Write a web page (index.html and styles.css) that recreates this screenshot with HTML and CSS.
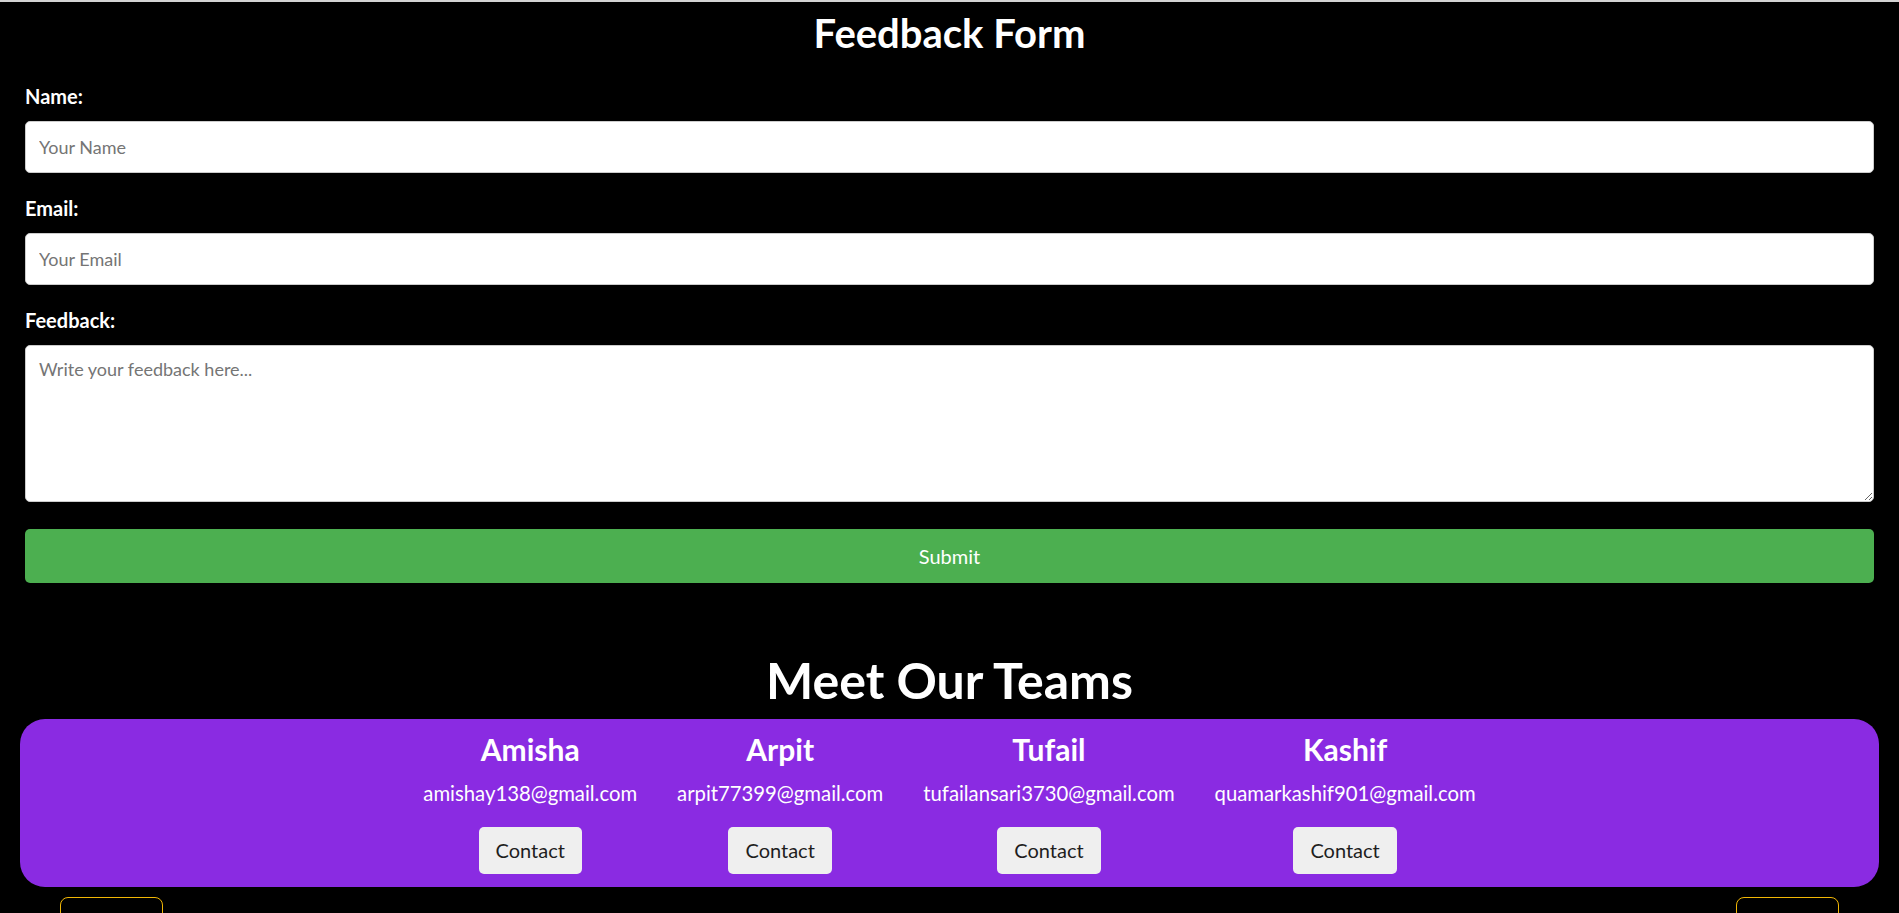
FILE: index.html
```html
<!DOCTYPE html>
<html lang="en">
<head>
<meta charset="utf-8">
<title>Feedback Form</title>
<link rel="stylesheet" href="styles.css">
</head>
<body>
<div class="topline"></div>
<main class="form-wrap">
  <h1 class="form-title">Feedback Form</h1>
  <form class="feedback-form">
    <label class="field-label" for="name">Name:</label>
    <input class="field-input" id="name" type="text" placeholder="Your Name">
    <label class="field-label" for="email">Email:</label>
    <input class="field-input" id="email" type="email" placeholder="Your Email">
    <label class="field-label" for="feedback">Feedback:</label>
    <textarea class="field-text" id="feedback" placeholder="Write your feedback here..."></textarea>
    <button class="submit-btn" type="button">Submit</button>
  </form>
</main>
<section class="team">
  <h2 class="team-title">Meet Our Teams</h2>
  <div class="team-box">
    <div class="member">
      <h3 class="member-name">Amisha</h3>
      <p class="member-email">amishay138@gmail.com</p>
      <button class="contact-btn" type="button">Contact</button>
    </div>
    <div class="member">
      <h3 class="member-name">Arpit</h3>
      <p class="member-email">arpit77399@gmail.com</p>
      <button class="contact-btn" type="button">Contact</button>
    </div>
    <div class="member">
      <h3 class="member-name">Tufail</h3>
      <p class="member-email">tufailansari3730@gmail.com</p>
      <button class="contact-btn" type="button">Contact</button>
    </div>
    <div class="member">
      <h3 class="member-name">Kashif</h3>
      <p class="member-email">quamarkashif901@gmail.com</p>
      <button class="contact-btn" type="button">Contact</button>
    </div>
  </div>
  <div class="nav-row">
    <button class="nav-btn" type="button"></button>
    <button class="nav-btn" type="button"></button>
  </div>
</section>
</body>
</html>
```
FILE: styles.css
```css
* { box-sizing: border-box; }

html, body {
  margin: 0;
  padding: 0;
  background: #000;
  color: #fff;
  font-family: "Lato", "Open Sans", "Liberation Sans", sans-serif;
}

.topline {
  height: 2px;
  background: #d3d3d3;
}

.form-wrap {
  padding: 0 25px;
}

.form-title {
  margin: 6.5px 0 0;
  font-size: 40px;
  line-height: 48px;
  font-weight: 700;
  text-align: center;
}

.feedback-form {
  display: flex;
  flex-direction: column;
  padding-top: 27.8px;
}

.field-label {
  display: block;
  font-size: 20px;
  line-height: 24px;
  font-weight: 700;
  margin-bottom: 12.7px;
}

.field-input {
  display: block;
  width: 100%;
  height: 52px;
  margin: 0 0 23.3px;
  padding: 0 13px;
  border: 1px solid #ccc;
  border-radius: 5px;
  background: #fff;
  font-family: inherit;
  font-size: 18px;
  color: #222;
}

.field-text {
  display: block;
  width: 100%;
  height: 157px;
  margin: 0 0 27px;
  padding: 12px 13px;
  border: 1px solid #ccc;
  border-radius: 5px;
  background: #fff;
  font-family: inherit;
  font-size: 18px;
  color: #222;
  resize: vertical;
}

.field-input::placeholder,
.field-text::placeholder {
  color: #757575;
}

.submit-btn {
  display: block;
  width: 100%;
  height: 54px;
  border: none;
  border-radius: 5px;
  background: #4caf50;
  color: #fff;
  font-family: inherit;
  font-size: 20px;
}

.team-title {
  margin: 66.6px 0 9.4px;
  font-size: 50px;
  line-height: 60px;
  font-weight: 700;
  text-align: center;
}

.team-box {
  margin: 0 20px;
  padding: 12px 0 13px;
  background: #8a2be2;
  border-radius: 25px;
  display: flex;
  justify-content: center;
  gap: 40px;
}

.member {
  display: flex;
  flex-direction: column;
  align-items: center;
}

.member-name {
  margin: 0;
  font-size: 30px;
  line-height: 36px;
  font-weight: 700;
}

.member-email {
  margin: 14px 0 22px;
  font-size: 20.3px;
  line-height: 24px;
}

.contact-btn {
  height: 47px;
  padding: 0 17px;
  border: none;
  border-radius: 5px;
  background: #efefef;
  color: #1e1e1e;
  font-family: inherit;
  font-size: 20px;
}

.nav-row {
  display: flex;
  justify-content: space-between;
  padding: 10px 60px 0;
}

.nav-btn {
  width: 103px;
  height: 48px;
  background: transparent;
  border: 1px solid #f2b705;
  border-radius: 8px;
}
```
